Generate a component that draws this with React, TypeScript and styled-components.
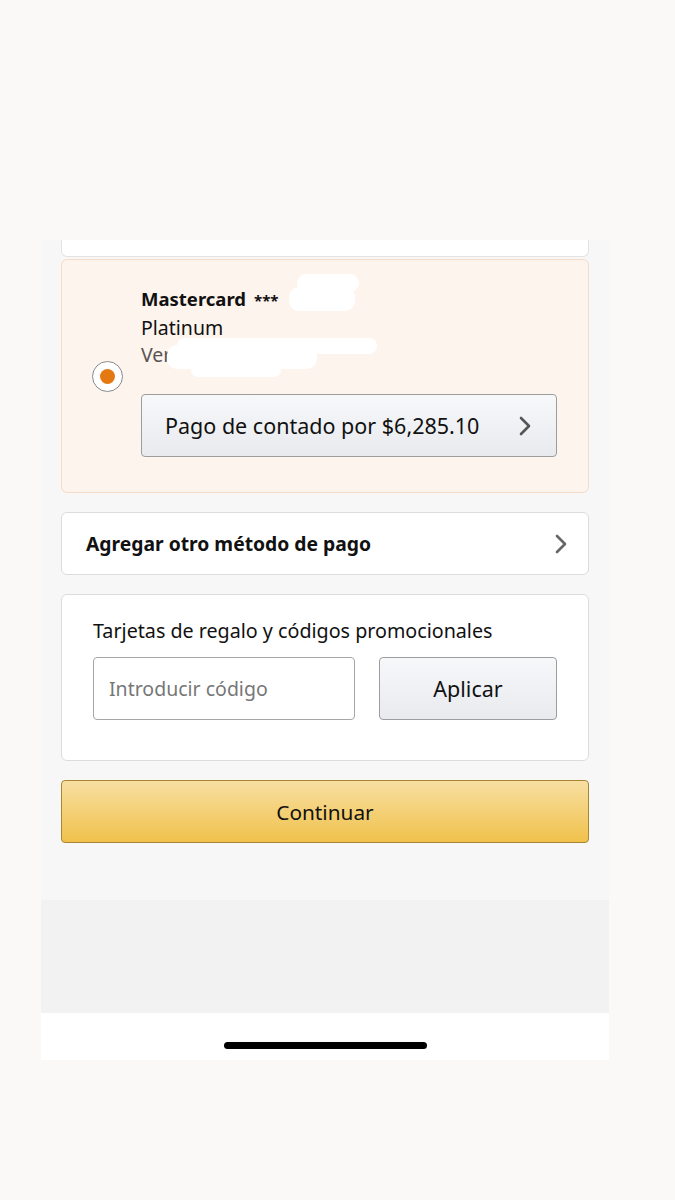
import styled, { createGlobalStyle } from "styled-components"

const GlobalStyle = createGlobalStyle`
  html, body {
    margin: 0;
    padding: 0;
    background: #fbf9f7;
  }
  body {
    font-family: "Noto Sans", "Open Sans", Arial, sans-serif;
    color: #111;
  }
`

const Page = styled.div`
  width: 675px;
  height: 1200px;
  padding-top: 240px;
  padding-left: 41px;
  box-sizing: border-box;
`

const Phone = styled.div`
  width: 568px;
  display: flex;
  flex-direction: column;
`

const Content = styled.div`
  background: #f7f7f7;
  padding: 0 20px 57px;
  display: flex;
  flex-direction: column;
`

const CardStub = styled.div`
  height: 16px;
  background: #fff;
  border: 1px solid #e3e3e3;
  border-top: none;
  border-radius: 0 0 6px 6px;
  margin-bottom: 2px;
`

const Card = styled.div<{ $selected?: boolean }>`
  background: ${(p) => (p.$selected ? "#fdf4ed" : "#fff")};
  border: 1px solid ${(p) => (p.$selected ? "#f6dcc6" : "#dcdcdc")};
  border-radius: 6px;
  box-sizing: border-box;
`

const SelectedCard = styled(Card)`
  height: 234px;
  display: flex;
  align-items: center;
  padding: 0 32px 0 30px;
  gap: 18px;
  margin-bottom: 19px;
`

const Radio = styled.div`
  width: 31px;
  height: 31px;
  border-radius: 50%;
  border: 1.5px solid #8a8a8a;
  background: #fff;
  box-sizing: border-box;
  display: flex;
  align-items: center;
  justify-content: center;
  flex-shrink: 0;

  &::after {
    content: "";
    width: 15px;
    height: 15px;
    border-radius: 50%;
    background: #e47911;
  }
`

const CardInfo = styled.div`
  flex: 1;
  align-self: flex-start;
  margin-top: 25px;
  display: flex;
  flex-direction: column;
`

const CardName = styled.div`
  font-size: 18.5px;
  font-weight: 700;
  line-height: 28px;

  span {
    font-weight: 700;
    font-size: 15px;
    margin-left: 8px;
  }
`

const CardLine = styled.div<{ $muted?: boolean }>`
  font-size: 19.5px;
  line-height: 27px;
  color: ${(p) => (p.$muted ? "#555" : "#111")};
`

const Redact = styled.div<{ $w: number; $h: number; $top: number; $left: number }>`
  position: absolute;
  top: ${(p) => p.$top}px;
  left: ${(p) => p.$left}px;
  width: ${(p) => p.$w}px;
  height: ${(p) => p.$h}px;
  background: #fff;
  border-radius: 10px;
`

const RedactHost = styled.div`
  position: relative;
`

const GreyButton = styled.button`
  height: 63px;
  border: 1px solid #9d9d9d;
  border-radius: 4px;
  background: linear-gradient(#f7f8fa, #e8eaee);
  font-family: inherit;
  font-size: 21.5px;
  color: #111;
  display: flex;
  align-items: center;
  box-sizing: border-box;
  cursor: pointer;
`

const PayButton = styled(GreyButton)`
  margin-top: 26px;
  width: 416px;
  padding: 0 24px 0 23px;
  justify-content: space-between;
`

const RowCard = styled(Card)`
  height: 63px;
  display: flex;
  align-items: center;
  justify-content: space-between;
  padding: 0 20px 0 24px;
  margin-bottom: 19px;
  font-size: 19.3px;
  font-weight: 700;
`

const PromoCard = styled(Card)`
  height: 167px;
  padding: 21px 31px 0;
  margin-bottom: 19px;
`

const PromoLabel = styled.div`
  font-size: 19.7px;
  line-height: 30px;
  margin-bottom: 11px;
`

const PromoRow = styled.div`
  display: flex;
  gap: 24px;
`

const CodeInput = styled.input`
  width: 262px;
  height: 63px;
  box-sizing: border-box;
  border: 1px solid #a6a6a6;
  border-radius: 4px;
  padding: 0 15px;
  font-family: inherit;
  font-size: 19.5px;
  color: #111;
  background: #fff;

  &::placeholder {
    color: #777;
  }
`

const ApplyButton = styled(GreyButton)`
  width: 180px;
  justify-content: center;
  padding-bottom: 2px;
`

const ContinueButton = styled.button`
  height: 63px;
  border: 1px solid #a88734;
  border-radius: 4px;
  background: linear-gradient(#f8dfa2, #f0c14b);
  font-family: inherit;
  font-size: 20.8px;
  color: #111;
  cursor: pointer;
`

const GreyBand = styled.div`
  height: 113px;
  background: #f2f2f2;
`

const HomeArea = styled.div`
  height: 47px;
  background: #fff;
  display: flex;
  justify-content: center;
  padding-top: 29px;
  box-sizing: border-box;
`

const HomeBar = styled.div`
  width: 203px;
  height: 7px;
  border-radius: 4px;
  background: #000;
`

const Chevron = ({ color = "#555" }: { color?: string }) => (
  <svg width="14" height="22" viewBox="0 0 14 22">
    <path d="M3 3 L11 11 L3 19" fill="none" stroke={color} strokeWidth="2.6" strokeLinecap="round" strokeLinejoin="round" />
  </svg>
)

export default function App() {
  return (
    <>
      <GlobalStyle />
      <Page>
        <Phone>
          <Content>
            <CardStub />
            <SelectedCard $selected>
              <Radio />
              <CardInfo>
                <RedactHost>
                  <CardName>
                    Mastercard<span>***</span>
                  </CardName>
                  <CardLine>Platinum</CardLine>
                  <CardLine $muted>Ver</CardLine>
                  <Redact $w={62} $h={18} $top={-11} $left={156} />
                  <Redact $w={66} $h={24} $top={2} $left={148} />
                  <Redact $w={200} $h={16} $top={53} $left={36} />
                  <Redact $w={150} $h={24} $top={60} $left={26} />
                  <Redact $w={90} $h={14} $top={78} $left={50} />
                </RedactHost>
                <PayButton>
                  Pago de contado por $6,285.10
                  <Chevron />
                </PayButton>
              </CardInfo>
            </SelectedCard>
            <RowCard>
              Agregar otro método de pago
              <Chevron color="#666" />
            </RowCard>
            <PromoCard>
              <PromoLabel>Tarjetas de regalo y códigos promocionales</PromoLabel>
              <PromoRow>
                <CodeInput placeholder="Introducir código" />
                <ApplyButton>Aplicar</ApplyButton>
              </PromoRow>
            </PromoCard>
            <ContinueButton>Continuar</ContinueButton>
          </Content>
          <GreyBand />
          <HomeArea>
            <HomeBar />
          </HomeArea>
        </Phone>
      </Page>
    </>
  )
}
